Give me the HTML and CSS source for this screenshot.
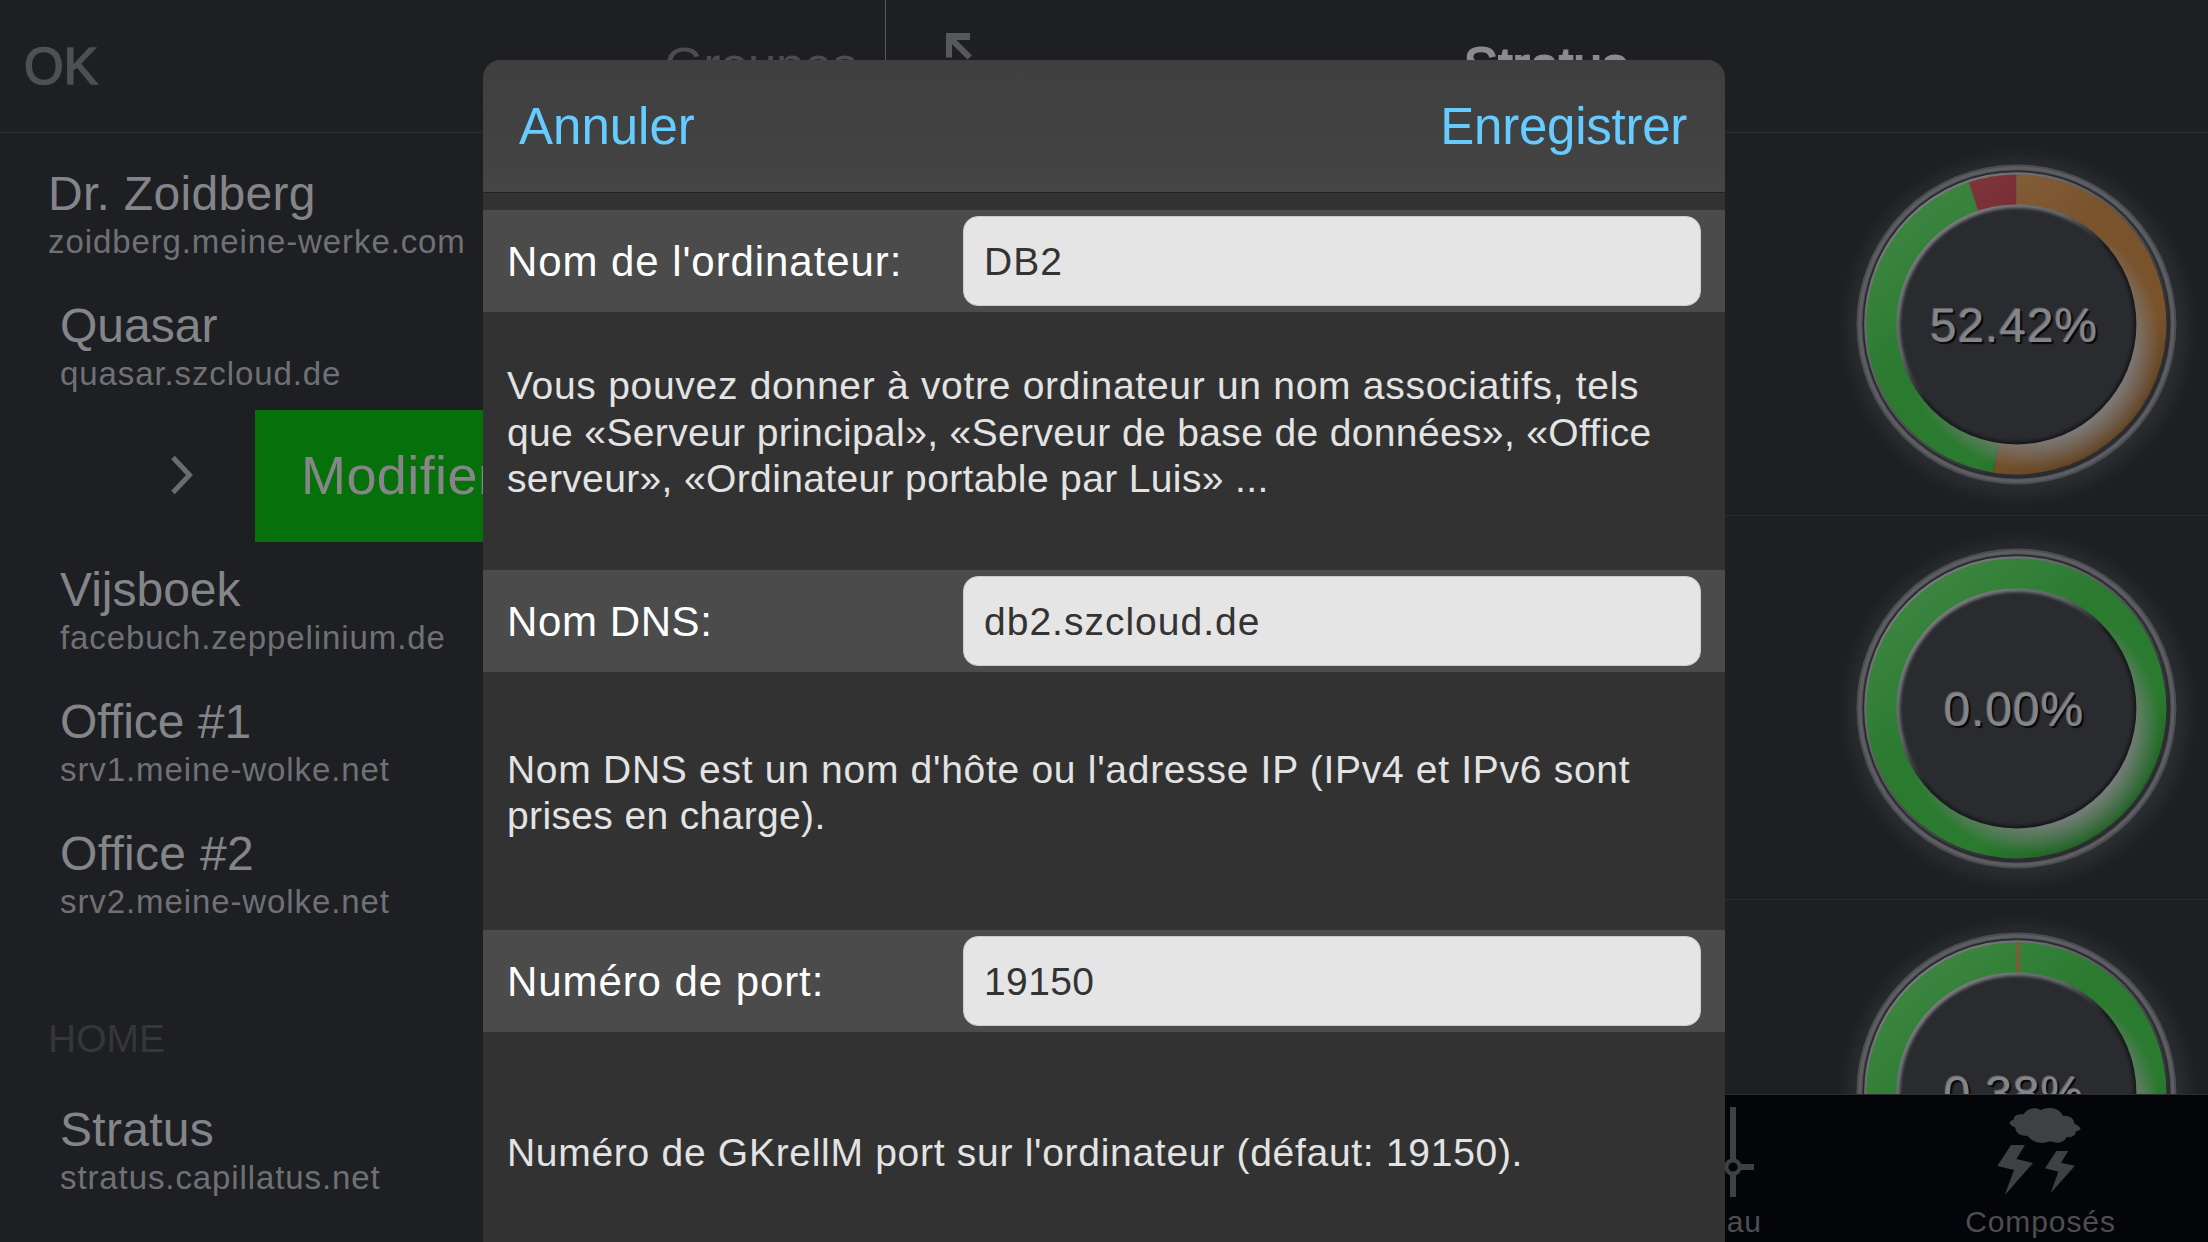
FILE: index.html
```html
<!DOCTYPE html>
<html lang="fr">
<head>
<meta charset="utf-8">
<title>Stratus</title>
<link rel="stylesheet" href="styles.css">
</head>
<body>
<svg class="defs" width="0" height="0" aria-hidden="true">
  <defs>
    <radialGradient id="halo" gradientUnits="userSpaceOnUse" cx="194" cy="195" r="184">
      <stop offset=".84" stop-color="#2d2e32"/>
      <stop offset=".92" stop-color="#25262a"/>
      <stop offset="1" stop-color="#1e1f23" stop-opacity="0"/>
    </radialGradient>
    <linearGradient id="rim" x1=".15" y1=".1" x2=".85" y2=".9">
      <stop offset="0" stop-color="#7c7d81"/>
      <stop offset=".45" stop-color="#55565a"/>
      <stop offset=".8" stop-color="#2c2d31"/>
    </linearGradient>
    <linearGradient id="bevel" x1=".15" y1=".1" x2=".85" y2=".9">
      <stop offset="0" stop-color="#7e7f82"/>
      <stop offset=".3" stop-color="#66676a"/>
      <stop offset=".5" stop-color="#1a1b1f"/>
      <stop offset="1" stop-color="#15161a"/>
    </linearGradient>
    <linearGradient id="sheen" x1=".15" y1=".08" x2=".85" y2=".92">
      <stop offset="0" stop-color="#fff" stop-opacity=".09"/>
      <stop offset=".4" stop-color="#fff" stop-opacity="0"/>
      <stop offset=".75" stop-color="#000" stop-opacity="0"/>
      <stop offset="1" stop-color="#000" stop-opacity=".25"/>
    </linearGradient>
    <radialGradient id="gloss" gradientUnits="userSpaceOnUse" cx="208" cy="210" r="128">
      <stop offset=".76" stop-color="#7d7e80" stop-opacity=".92"/>
      <stop offset=".87" stop-color="#7d7e80" stop-opacity=".5"/>
      <stop offset="1" stop-color="#7d7e80" stop-opacity="0"/>
    </radialGradient>
    <filter id="soft" x="-10%" y="-10%" width="120%" height="120%" color-interpolation-filters="sRGB"><feGaussianBlur stdDeviation="1.4"/></filter>
    <g id="gauge-frame">
      <circle cx="192" cy="192" r="192" fill="url(#halo)"/>
      <circle cx="192.4" cy="192.4" r="160" fill="#4c4d51"/>
      <circle cx="192.4" cy="192.4" r="156.5" fill="none" stroke="#5d5e62" stroke-width="3"/>
      <circle cx="192.4" cy="192.4" r="154" fill="#2a2b2f"/>
      <circle cx="192.4" cy="192.4" r="152.2" fill="url(#rim)"/>
    </g>
    <g id="gauge-face">
      <circle cx="192.4" cy="192.4" r="150" fill="url(#sheen)"/>
      <circle cx="192.4" cy="192.4" r="150" fill="url(#gloss)"/>
      <circle cx="192.4" cy="192.4" r="120" fill="url(#bevel)"/>
      <circle cx="192.8" cy="192.8" r="116.8" fill="#2a2b2f" filter="url(#soft)"/>
    </g>
  </defs>
</svg>

<div class="app">
  <aside class="sidebar">
    <header class="bar">
      <span class="bar-ok">OK</span>
      <span class="bar-groups">Groupes</span>
    </header>
    <div class="hosts">
      <div class="host host-top"><div class="name wide">Dr. Zoidberg</div><div class="dns">zoidberg.meine-werke.com</div></div>
      <div class="host"><div class="name">Quasar</div><div class="dns">quasar.szcloud.de</div></div>
      <div class="swiped">
        <svg class="chevron" width="24" height="40" viewBox="0 0 24 40"><path d="M3 2.5 19.5 20 3 37.500" fill="none" stroke="#6b6c70" stroke-width="5"/></svg>
        <div class="edit">Modifier</div>
      </div>
      <div class="host"><div class="name">Vijsboek</div><div class="dns">facebuch.zeppelinium.de</div></div>
      <div class="host"><div class="name">Office #1</div><div class="dns">srv1.meine-wolke.net</div></div>
      <div class="host"><div class="name wide">Office #2</div><div class="dns">srv2.meine-wolke.net</div></div>
      <div class="section">HOME</div>
      <div class="host"><div class="name wide">Stratus</div><div class="dns">stratus.capillatus.net</div></div>
    </div>
  </aside>

  <main class="detail">
    <header class="bar">
      <svg class="expand" width="60" height="60" viewBox="0 0 60 60"><path d="M0 0H24V7H10.500L26 22.500 21.500 26.500 6 11V24.500H0Z" fill="#57585c"/></svg>
      <h1 class="title">Stratus</h1>
    </header>
    <div class="gauges">
      <div class="gauge-row">
        <div class="gauge">
          <svg width="384" height="384" viewBox="0 0 384 384">
            <use href="#gauge-frame"/>
            <g transform="translate(.4 .4)">
              <path d="M192 192V42A150 150 0 1 1 169.290 340.270Z" fill="#79532c"/>
              <path d="M192 192 169.290 340.270A150 150 0 0 1 144.150 49.840Z" fill="#2a7a2f"/>
              <path d="M192 192 144.150 49.840A150 150 0 0 1 192 42Z" fill="#73252b"/>
            </g>
            <use href="#gauge-face"/>
          </svg>
          <span class="value">52.42%</span>
        </div>
      </div>
      <div class="gauge-row">
        <div class="gauge">
          <svg width="384" height="384" viewBox="0 0 384 384">
            <use href="#gauge-frame"/>
            <circle cx="192.400" cy="192.400" r="150" fill="#2a7a2f"/>
            <use href="#gauge-face"/>
          </svg>
          <span class="value">0.00%</span>
        </div>
      </div>
      <div class="gauge-row">
        <div class="gauge">
          <svg width="384" height="384" viewBox="0 0 384 384">
            <use href="#gauge-frame"/>
            <circle cx="192.400" cy="192.400" r="150" fill="#2a7a2f"/>
            <path d="M192 192V42.400H195.600V192Z" fill="#79532c"/>
            <use href="#gauge-face"/>
          </svg>
          <span class="value">0.38%</span>
        </div>
      </div>
    </div>
    <nav class="tabs">
      <div class="tab">
        <svg width="96" height="90" viewBox="0 0 96 90" fill="none" stroke="#3f4044" stroke-width="6"><path d="M75 0V52M75 68V90M83 60H96M0 60H67"/><circle cx="75" cy="60" r="6.700" stroke-width="4.200"/></svg>
        <span>Réseau</span>
      </div>
      <div class="tab">
        <svg width="84" height="90" viewBox="54 33 252 270" fill="#3f4044">
          <path d="M91 80Q94 73 103 71Q106 52 134 55Q145 36 170 37Q178 38 184 42Q198 36 216 36Q242 38 251 59Q284 58 287 83Q299 88 305 98Q300 105 291 106Q289 126 263 123Q250 149 213 136Q172 152 146 120Q110 120 108 94Q96 91 91 80Z"/>
          <path d="M96 147H138L112 189 162 201 77 298 105 222 55 210Z"/>
          <path d="M232 165H268L246 200 288 209 215 291 238 227 198 217Z"/>
        </svg>
        <span>Composés</span>
      </div>
    </nav>
  </main>
</div>

<div class="sheet">
  <header class="sheet-bar">
    <span>Annuler</span>
    <span class="save">Enregistrer</span>
  </header>
  <div class="form">
    <div class="field"><label>Nom de l'ordinateur:</label><div class="input">DB2</div></div>
    <p class="help"><span>Vous pouvez donner à votre ordinateur un nom associatifs, tels</span><span class="tight">que «Serveur principal», «Serveur de base de données», «Office</span><span class="tight">serveur», «Ordinateur portable par Luis» ...</span></p>
    <div class="field"><label class="short">Nom DNS:</label><div class="input">db2.szcloud.de</div></div>
    <p class="help"><span>Nom DNS est un nom d'hôte ou l'adresse IP (IPv4 et IPv6 sont</span><span class="tight">prises en charge).</span></p>
    <div class="field"><label>Numéro de port:</label><div class="input number">19150</div></div>
    <p class="help"><span>Numéro de GKrellM port sur l'ordinateur (défaut: 19150).</span></p>
  </div>
</div>
</body>
</html>
```
FILE: styles.css
```css
* { box-sizing: border-box; }

body {
  margin: 0;
  width: 2208px;
  height: 1242px;
  overflow: hidden;
  position: relative;
  background: #1e1f23;
  font-family: "Liberation Sans", Arial, sans-serif;
  font-variant-ligatures: none;
  white-space: nowrap;
}

svg { display: block; flex: none; }
.defs { position: absolute; }

.app {
  display: grid;
  grid-template-columns: 886px 1fr;
  height: 1242px;
}

.bar {
  display: flex;
  height: 133px;
  flex: none;
  border-bottom: 1px solid #2e2f33;
  font-size: 51px;
  line-height: 133px;
}

/* Sidebar */
.sidebar {
  border-right: 1px solid #58595c;
  overflow: hidden;
}
.sidebar .bar {
  justify-content: space-between;
  padding: 0 28px 0 24px;
  color: #4b4c50;
}
.bar-ok { color: #4f5054; -webkit-text-stroke: 1.6px #4f5054; }
.bar-groups { letter-spacing: -0.4px; }

.hosts { padding-top: 13px; }
.host { height: 132px; padding: 20px 0 0 60px; }
.host-top { padding-left: 48px; }
.name { font-size: 48px; line-height: 55px; color: #848589; }
.name.wide { letter-spacing: 0.3px; }
.dns { font-size: 33px; line-height: 41px; letter-spacing: 0.9px; color: #707175; }

.swiped { display: flex; align-items: center; height: 132px; padding-left: 170px; }
.chevron { margin: -3px 61px 0 0; }
.edit {
  flex: 1;
  height: 132px;
  padding-left: 46px;
  background: #06700a;
  color: #868689;
  font-size: 54px;
  line-height: 130px;
  letter-spacing: 0.4px;
}

.section {
  height: 144px;
  padding: 73px 0 0 48px;
  font-size: 39px;
  line-height: 55px;
  color: #35363a;
}

/* Detail pane */
.detail {
  display: flex;
  flex-direction: column;
  height: 1242px;
  overflow: hidden;
}
.expand { margin: 33px 0 0 60px; }
.title {
  flex: 1;
  margin: 0 122px 0 0;
  text-align: center;
  font-size: 51px;
  font-weight: normal;
  letter-spacing: 0.4px;
  color: #8a8b8f;
  -webkit-text-stroke: 2px #8a8b8f;
}
.gauges { flex: 1; min-height: 0; margin-top: -1px; overflow: hidden; }
.gauge-row {
  display: flex;
  justify-content: flex-end;
  height: 384px;
  border-bottom: 1px solid #2b2c30;
}
.gauge { display: grid; width: 384px; height: 384px; }
.gauge > * { grid-area: 1 / 1; }
.value {
  padding-right: 4px;
  text-align: center;
  font-size: 48px;
  line-height: 387px;
  letter-spacing: 0.9px;
  color: #848589;
  text-shadow: -1px -1px 0 #626367, 2px 2px 1px #07080c;
}

.tabs {
  display: flex;
  justify-content: flex-end;
  flex: none;
  height: 148px;
  padding-right: 1px;
  border-top: 1px solid #2b2c2f;
  background: #040509;
  position: relative;
}
.tab {
  display: flex;
  flex-direction: column;
  align-items: center;
  width: 333px;
  padding-top: 12px;
  font-size: 30px;
  line-height: 49px;
  letter-spacing: 0.9px;
  color: #4d4e52;
}
.tab svg { margin-right: 3px; }

/* Edit sheet over both panes */
.sheet {
  position: absolute;
  left: 483px;
  top: 60px;
  width: 1242px;
  height: 1182px;
  overflow: hidden;
  border-radius: 18px 18px 0 0;
  background: #323232;
}
.sheet-bar {
  display: flex;
  justify-content: space-between;
  height: 133px;
  padding: 0 38px 0 36px;
  border-bottom: 1px solid #232323;
  background: linear-gradient(#3f3f3f, #414141 50%, #454545);
  font-size: 51px;
  line-height: 133px;
  color: #66ccff;
}
.save { letter-spacing: -0.25px; }

.form { padding-top: 17px; }
.field {
  display: flex;
  height: 102px;
  padding: 6px 24px;
  background: #4b4b4b;
}
.field label {
  width: 456px;
  font-size: 42px;
  line-height: 91px;
  letter-spacing: 0.92px;
  color: #fff;
}
.field label.short { letter-spacing: 0.6px; }
.input {
  flex: 1;
  padding-left: 20px;
  border: 1px solid #cacaca;
  border-radius: 15px;
  background: #e5e5e5;
  font-size: 39px;
  line-height: 89px;
  letter-spacing: 1px;
  color: #333;
}
.input.number { letter-spacing: 0.4px; }

.help {
  display: flex;
  flex-direction: column;
  justify-content: center;
  height: 240px;
  margin: 0 0 18px;
  padding: 2px 0 0 24px;
  font-size: 39px;
  line-height: 46.5px;
  letter-spacing: 0.71px;
  color: #e3e3e3;
}
.help .tight { letter-spacing: 0.36px; }
```
